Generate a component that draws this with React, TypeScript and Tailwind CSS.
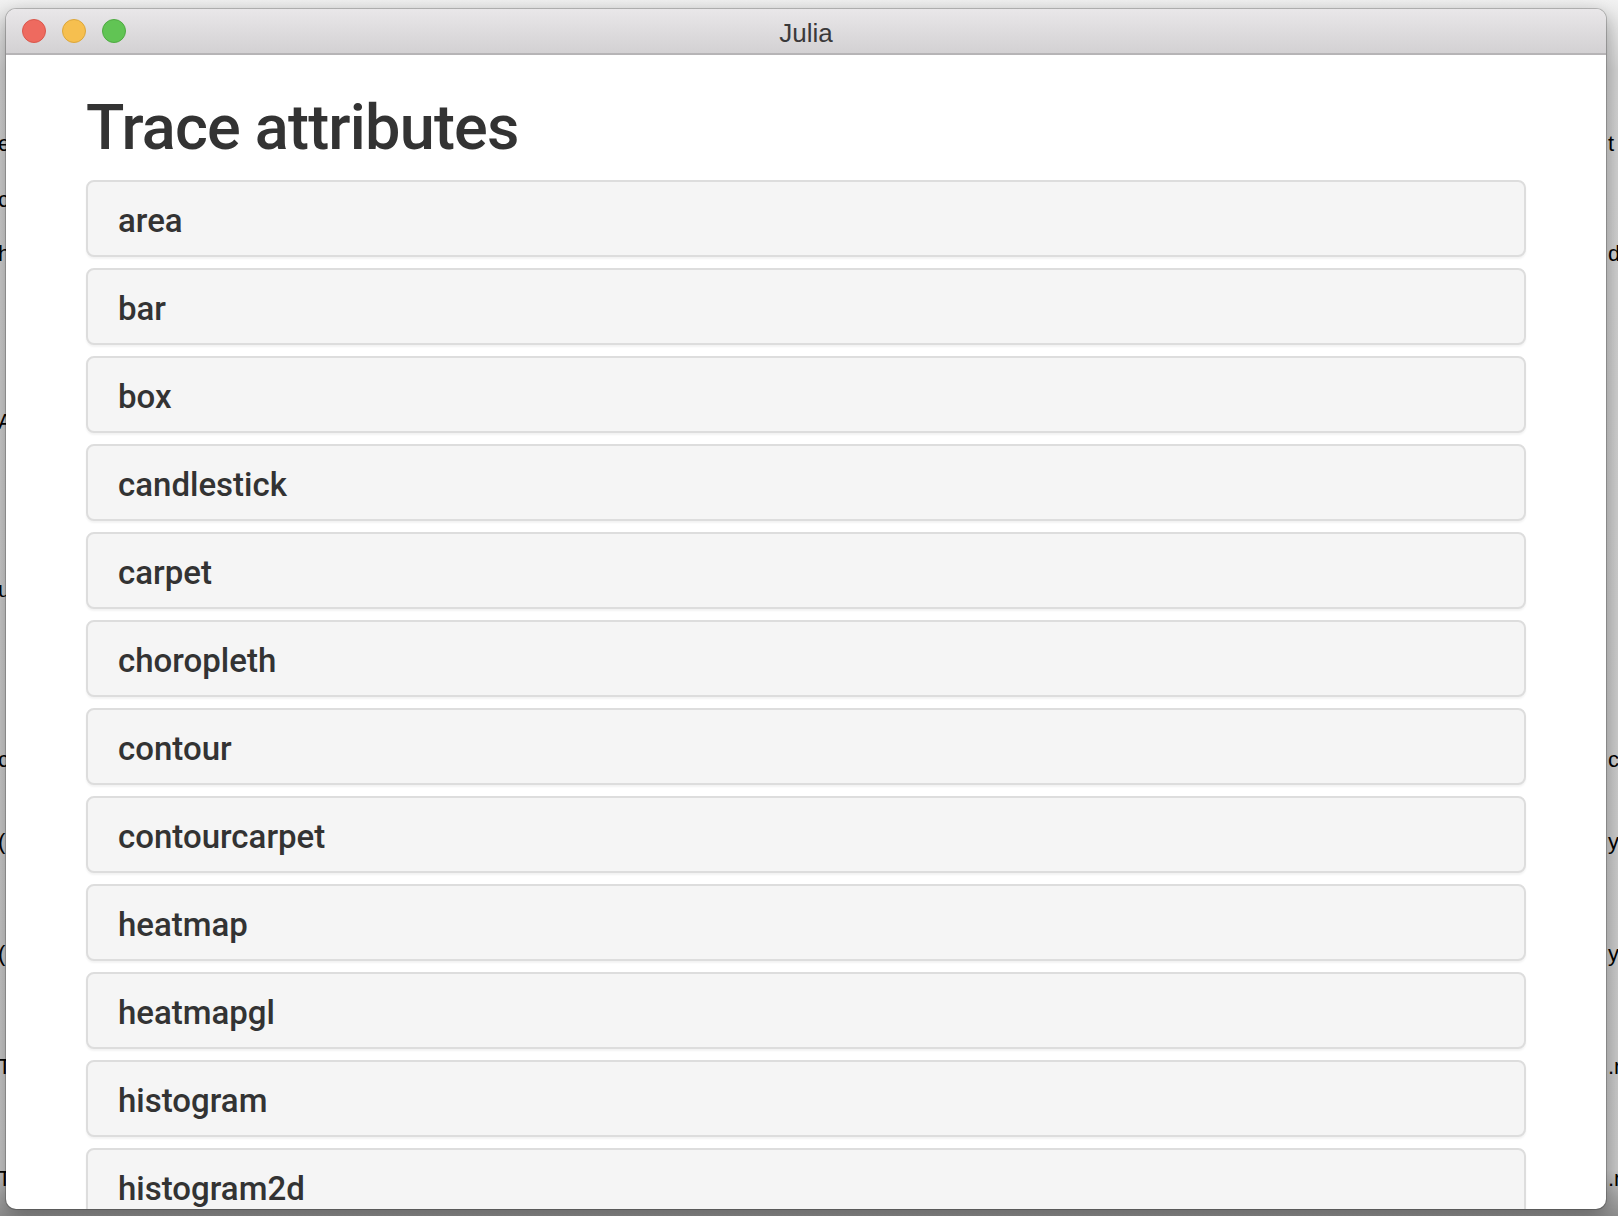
import React from "react";

/* ── Data ─────────────────────────────────────────────────────────────────── */
const traces = [
  "area",
  "bar",
  "box",
  "candlestick",
  "carpet",
  "choropleth",
  "contour",
  "contourcarpet",
  "heatmap",
  "heatmapgl",
  "histogram",
  "histogram2d",
];

// fragments of the window behind, peeking out at the edges
const leftBits = [
  { t: "e", y: 133 },
  { t: "c", y: 189 },
  { t: "h", y: 243 },
  { t: "A", y: 411 },
  { t: "u", y: 579 },
  { t: "c", y: 749 },
  { t: "(", y: 831 },
  { t: "(", y: 943 },
  { t: "T", y: 1056 },
  { t: "T", y: 1168 },
];
const rightBits = [
  { t: "t", y: 133 },
  { t: "d", y: 243 },
  { t: "c", y: 749 },
  { t: "y", y: 831 },
  { t: "y", y: 943 },
  { t: ".n", y: 1056 },
  { t: ".n", y: 1168 },
];

/* ── Title bar ────────────────────────────────────────────────────────────── */
function TitleBar() {
  return (
    <div className="relative flex h-[46px] shrink-0 items-center border-b-2 border-[#b6b4b6] bg-gradient-to-b from-[#e9e7e9] to-[#d3d1d3] px-[16px]">
      <div className="flex gap-[16px]">
        <span className="h-[24px] w-[24px] rounded-full border border-[#d9574c] bg-[#ee6a5f]" />
        <span className="h-[24px] w-[24px] rounded-full border border-[#dba63b] bg-[#f6bf4f]" />
        <span className="h-[24px] w-[24px] rounded-full border border-[#4faa42] bg-[#61c454]" />
      </div>
      <div className="absolute inset-0 flex items-center justify-center pt-[4px] text-[26px] text-[#3a393a] font-['Helvetica_Neue','Liberation_Sans',sans-serif]">
        Julia
      </div>
    </div>
  );
}

/* ── Page ─────────────────────────────────────────────────────────────────── */
export default function App() {
  return (
    <div className="relative h-[1216px] w-[1618px] overflow-hidden bg-[linear-gradient(to_bottom,#f2f2f2_0px,#d2d2d2_70px,#c8c8c8_1170px,#8e8e8e_1216px)] font-['Liberation_Sans',sans-serif]">
      {leftBits.map((b, i) => (
        <span
          key={"l" + i}
          className="absolute left-[-2px] text-[22px] leading-none text-black"
          style={{ top: b.y }}
        >
          {b.t}
        </span>
      ))}
      {rightBits.map((b, i) => (
        <span
          key={"r" + i}
          className="absolute left-[1608px] text-[22px] leading-none text-black"
          style={{ top: b.y }}
        >
          {b.t}
        </span>
      ))}

      <div className="relative pl-[6px] pt-[9px]">
        <div className="flex h-[1200px] w-[1600px] flex-col overflow-hidden rounded-[10px] bg-white shadow-[0_0_0_1px_rgba(0,0,0,0.2),0_6px_20px_rgba(0,0,0,0.35)]">
          <TitleBar />
          <div className="px-[80px] font-['Roboto','Liberation_Sans',sans-serif] text-[#333333]">
            <h1 className="mb-[18px] mt-[38px] text-[63px] font-medium leading-[1.1] tracking-[-0.8px]">
              Trace attributes
            </h1>
            <div className="flex flex-col gap-[11px]">
              {traces.map((t) => (
                <div
                  key={t}
                  className="flex h-[77px] shrink-0 items-center rounded-[8px] border-2 border-[#dddddd] bg-[#f5f5f5] px-[30px] pt-[4px] shadow-[0_2px_2px_rgba(0,0,0,0.05)]"
                >
                  <span className="text-[33px] font-medium leading-[1.1]">{t}</span>
                </div>
              ))}
            </div>
          </div>
        </div>
      </div>
    </div>
  );
}
